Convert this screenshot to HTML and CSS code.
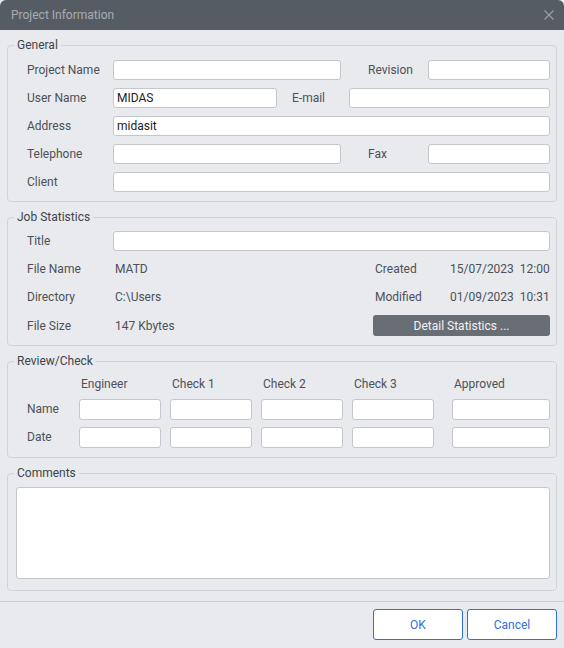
FILE: index.html
```html
<!DOCTYPE html>
<html>
<head>
<meta charset="utf-8">
<link rel="stylesheet" href="styles.css">
</head>
<body>
<div class="window">
  <div class="titlebar">
    <span class="title">Project Information</span>
    <svg class="close" width="10" height="10" viewBox="0 0 10 10"><path d="M0.5 0.5 L9.5 9.5 M9.5 0.5 L0.5 9.5" stroke="#9ba0a7" stroke-width="1.1" fill="none"/></svg>
  </div>
  <div class="content">
    <fieldset class="group general">
      <legend>General</legend>
      <div class="inner">
        <div class="row">
          <span class="lbl">Project Name</span>
          <input class="in w-proj" type="text">
          <span class="lbl2 rev">Revision</span>
          <input class="in grow" type="text">
        </div>
        <div class="row">
          <span class="lbl">User Name</span>
          <input class="in w-user" type="text" value="MIDAS">
          <span class="lbl2 mail">E-mail</span>
          <input class="in grow" type="text">
        </div>
        <div class="row">
          <span class="lbl">Address</span>
          <input class="in grow" type="text" value="midasit">
        </div>
        <div class="row">
          <span class="lbl">Telephone</span>
          <input class="in w-proj" type="text">
          <span class="lbl2 rev">Fax</span>
          <input class="in grow" type="text">
        </div>
        <div class="row">
          <span class="lbl">Client</span>
          <input class="in grow" type="text">
        </div>
      </div>
    </fieldset>

    <fieldset class="group job">
      <legend>Job Statistics</legend>
      <div class="inner">
        <div class="row">
          <span class="lbl">Title</span>
          <input class="in grow" type="text">
        </div>
        <div class="row">
          <span class="lbl">File Name</span>
          <span class="val">MATD</span>
          <span class="lbl3">Created</span>
          <span class="date">15/07/2023&nbsp;&nbsp;12:00</span>
        </div>
        <div class="row">
          <span class="lbl">Directory</span>
          <span class="val">C:\Users</span>
          <span class="lbl3">Modified</span>
          <span class="date">01/09/2023&nbsp;&nbsp;10:31</span>
        </div>
        <div class="row tall">
          <span class="lbl">File Size</span>
          <span class="val">147 Kbytes</span>
          <button class="detail">Detail Statistics ...</button>
        </div>
      </div>
    </fieldset>

    <fieldset class="group review">
      <legend>Review/Check</legend>
      <div class="inner rgrid">
        <span></span>
        <span class="hd">Engineer</span>
        <span class="hd">Check 1</span>
        <span class="hd">Check 2</span>
        <span class="hd">Check 3</span>
        <span class="hd appr">Approved</span>

        <span class="rl">Name</span>
        <input class="in" type="text">
        <input class="in" type="text">
        <input class="in" type="text">
        <input class="in" type="text">
        <input class="in appr" type="text">

        <span class="rl">Date</span>
        <input class="in" type="text">
        <input class="in" type="text">
        <input class="in" type="text">
        <input class="in" type="text">
        <input class="in appr" type="text">
      </div>
    </fieldset>

    <fieldset class="group comments">
      <legend>Comments</legend>
      <textarea class="ta"></textarea>
    </fieldset>
  </div>
  <div class="footer">
    <button class="btn">OK</button>
    <button class="btn">Cancel</button>
  </div>
</div>
</body>
</html>
```

FILE: styles.css
```css
* { box-sizing: border-box; }
html, body { margin: 0; padding: 0; background: #e9eaed; }
body {
  font-family: Roboto, Inter, "Liberation Sans", sans-serif;
  font-size: 12px;
  color: #4c5159;
}
.window {
  width: 564px;
  height: 648px;
  background: #e9eaed;
  display: flex;
  flex-direction: column;
}
.titlebar {
  height: 30px;
  background: #555c64;
  display: flex;
  align-items: center;
  justify-content: space-between;
  padding: 0 10px 0 11px;
  border-radius: 6px 6px 0 0;
}
.title { color: #a7acb3; font-size: 12px; }
.close { display: block; }

.content {
  padding: 8px 7px 0 7px;
  display: flex;
  flex-direction: column;
  gap: 8px;
}
.group {
  margin: 0;
  min-width: 0;
  border: 1px solid #d0d3d7;
  border-radius: 4px;
  padding: 0 6px 9px 6px;
}
.group legend {
  margin-left: 0;
  padding: 0 3px;
  line-height: 14px;
  height: 14px;
  color: #3f444b;
  font-size: 12px;
}
.inner { padding-left: 13px; }
.general { padding-top: 8px; }
.job { padding-top: 7px; }
.review { padding-top: 6px; }
.comments { padding: 7px 6px 11px 6px; }

.row {
  display: flex;
  align-items: center;
  height: 20px;
  margin-bottom: 8px;
}
.row:last-child { margin-bottom: 0; }
.row.tall { height: 21px; }

.lbl { width: 86px; flex: none; white-space: nowrap; }
.lbl2 { flex: none; white-space: nowrap; }
.lbl2.rev { margin-left: 27px; width: 60px; }
.lbl2.mail { margin-left: 15px; width: 57px; }

.in {
  height: 20px;
  border: 1px solid #c3c6cb;
  border-radius: 3px;
  background: #fff;
  font-family: inherit;
  font-size: 12px;
  color: #1b1d20;
  padding: 0 3px;
  outline: none;
  margin: 0;
}
.w-proj { width: 228px; flex: none; }
.w-user { width: 164px; flex: none; }
.grow { flex: 1; min-width: 0; }

.val { width: 260px; flex: none; padding-left: 2px; white-space: nowrap; }
.lbl3 { width: 77px; flex: none; white-space: nowrap; padding-left: 2px; }
.date {
  flex: 1;
  min-width: 0;
  overflow: hidden;
  white-space: nowrap;
}
.detail {
  flex: 1;
  height: 21px;
  background: #696e75;
  color: #f2f3f4;
  border: none;
  border-radius: 3px;
  font-family: inherit;
  font-size: 12px;
  padding: 0;
  margin: 0;
}

.rgrid {
  display: grid;
  grid-template-columns: 43px 82px 82px 82px 82px 107px;
  grid-template-rows: 20px 26px 28px;
  column-gap: 9px;
  row-gap: 0;
  align-items: end;
}
.rgrid .in { height: 21px; width: 100%; }
.rgrid .in.appr, .hd.appr { margin-left: 9px; }
.rgrid .in.appr { width: 98px; }
.hd { padding-left: 2px; white-space: nowrap; line-height: 20px; height: 20px; }
.rl { white-space: nowrap; height: 21px; line-height: 21px; }

.ta {
  display: block;
  width: calc(100% - 2px);
  margin: 0 0 0 2px;
  height: 92px;
  border: 1px solid #c3c6cb;
  border-radius: 3px;
  background: #fff;
  resize: none;
  outline: none;
}

.footer {
  margin-top: 10px;
  border-top: 1px solid #c9ccd1;
  padding: 7px 7px 0 0;
  display: flex;
  justify-content: flex-end;
  gap: 4px;
}
.btn {
  width: 90px;
  height: 31px;
  background: #fff;
  border: 1px solid #2f6fe0;
  border-radius: 3px;
  color: #2f6fe0;
  font-family: inherit;
  font-size: 12px;
  margin: 0;
}
```
